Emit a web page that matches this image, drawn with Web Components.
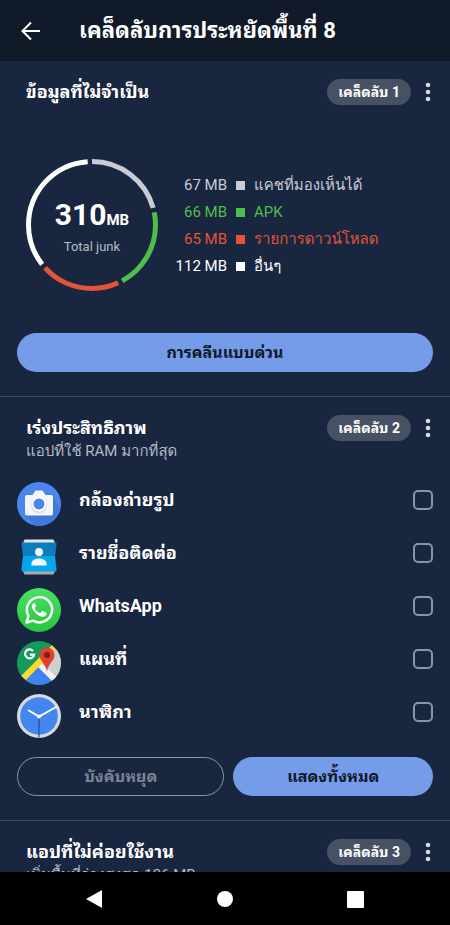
<!DOCTYPE html>
<html lang="th">
<head>
<meta charset="utf-8">
<meta name="viewport" content="width=device-width, initial-scale=1">
<title>เคล็ดลับการประหยัดพื้นที่</title>
<style>
  :root {
    --bg: #19263f;
    --bar: #111a29;
    --accent: #759ce8;
    --line: #3d4757;
    --muted: #b4bac6;
    --silver: #cbcbd7;
    --green: #4fbe4b;
    --red: #e4533a;
    --bold-font: Roboto, "Noto Sans Thai Looped", "Noto Sans", sans-serif;
  }
  body {
    margin: 0;
    height: 100vh;
    display: flex;
    flex-direction: column;
    overflow: hidden;
    background: var(--bg);
    color: #fff;
    font-family: Roboto, Loma, "Noto Sans", sans-serif;
  }
  main {
    flex: 1;
    min-height: 0;
    overflow: hidden;
  }
</style>
</head>
<body>
<app-bar>เคล็ดลับการประหยัดพื้นที่ 8</app-bar>
<main>
  <tip-section heading="ข้อมูลที่ไม่จำเป็น" tip="เคล็ดลับ 1">
    <junk-chart></junk-chart>
    <pill-button slot="actions">การคลีนแบบด่วน</pill-button>
  </tip-section>
  <tip-section heading="เร่งประสิทธิภาพ" sub="แอปที่ใช้ RAM มากที่สุด" tip="เคล็ดลับ 2">
    <app-list>
      <app-row name="กล้องถ่ายรูป">
        <svg viewBox="0 0 44 44">
          <circle cx="22" cy="22" r="22" fill="#4a86ee"/>
          <path d="M8 33.500L18 43.600A22 22 0 0 0 43 28L36 14z" fill="#4079dc"/>
          <path d="M10 13h5.500l3-4.500h7l3 4.500H34q2 0 2 2V31.500q0 2-2 2H10q-2 0-2-2V15q0-2 2-2z" fill="#f5f5f6"/>
          <circle cx="22" cy="23" r="8" fill="#d5dae4"/>
          <circle cx="22" cy="22" r="7.500" fill="#fff"/>
          <circle cx="22" cy="22" r="5.500" fill="#4a86ee"/>
        </svg>
      </app-row>
      <app-row name="รายชื่อติดต่อ">
        <svg viewBox="0 0 44 44">
          <path d="M7.500 4.500h29l2 5h-33z" fill="#e6e6e6"/>
          <path d="M5.500 35h33l-2 4.500h-29z" fill="#a9a9a9"/>
          <path d="M5 7.500h34q1 .500.500 2L38 22H6L4.500 9.500Q4 8 5 7.500z" fill="#0c7cbd"/>
          <path d="M6 21h32l1.500 13q.500 2-1 2.500h-33q-1.500-.500-1-2.500z" fill="#04a7ec"/>
          <circle cx="22" cy="17" r="4" fill="#f3f6f8"/>
          <path d="M14.500 30.500v-2c0-3.500 4-5 7.500-5s7.500 1.500 7.500 5v2z" fill="#f3f6f8"/>
        </svg>
      </app-row>
      <app-row name="WhatsApp">
        <svg viewBox="0 0 44 44">
          <defs>
            <linearGradient id="wa" x2="0" y2="1"><stop stop-color="#4be065"/><stop offset="1" stop-color="#25c63e"/></linearGradient>
          </defs>
          <circle cx="22" cy="22" r="22" fill="url(#wa)"/>
          <path d="M9.500 34.500l2-6.600a12.600 12.600 0 1 1 4.600 4.700z" fill="none" stroke="#fff" stroke-width="2.400" stroke-linejoin="round"/>
          <path d="M17.600 15.200c-.600-.200-1.400 0-1.800.500-1.600 1.700-1.300 4.200 1 7.200 3 4 6.300 6 9.200 5.800 2.100-.200 3.500-1.500 3.500-3.300 0-.500-.100-.700-.500-.900l-3-1.500c-.500-.200-.800-.100-1.100.300l-1.200 1.500c-.300.300-.600.400-1 .200-2.200-.900-3.800-2.500-4.900-4.500-.200-.400-.100-.700.200-1l.900-1.200c.200-.300.200-.600.100-.900z" fill="#fff"/>
        </svg>
      </app-row>
      <app-row name="แผนที่">
        <svg viewBox="0 0 44 44">
          <defs><clipPath id="disc"><circle cx="22" cy="22" r="22"/></clipPath></defs>
          <g clip-path="url(#disc)">
            <path d="M0 0h44v44H0z" fill="#149b58"/>
            <path d="M44 3L21 24l20 20h3z" fill="#cfcfd1"/>
            <path d="M4 44l18-18 18 18z" fill="#3f82f1"/>
            <path d="M24 22l18 16-5 4-16-16z" fill="#f1f1f2"/>
            <path d="M35 4l4 4L9 39l-5-4z" fill="#fdd835"/>
            <path d="M30 30.500C28.500 22 22.500 20 22.500 14a7.500 7.500 0 0 1 15 0c0 6-6 8-7.500 16.500z" fill="#e0402f"/>
            <circle cx="30" cy="14" r="3" fill="#7b1d16"/>
            <path d="M16 10A4.500 4.500 0 1 0 17 13.700H12.800" fill="none" stroke="#fff" stroke-width="2.200"/>
          </g>
        </svg>
      </app-row>
      <app-row name="นาฬิกา">
        <svg viewBox="0 0 44 44">
          <circle cx="22" cy="22" r="22" fill="#d5dae1"/>
          <circle cx="22" cy="22" r="18.800" fill="#4485ef"/>
          <path d="M22 23v20.500" stroke="#2b3f66" stroke-width="1"/>
          <path d="M11 16l11 6.500L40 12.500" fill="none" stroke="#fff" stroke-width="2"/>
          <circle cx="22" cy="22.500" r="2" fill="#fff"/>
        </svg>
      </app-row>
    </app-list>
    <pill-button slot="actions" outline>บังคับหยุด</pill-button>
    <pill-button slot="actions">แสดงทั้งหมด</pill-button>
  </tip-section>
  <tip-section heading="แอปที่ไม่ค่อยใช้งาน" sub="เพิ่มพื้นที่ว่างสูงสุด 126 MB" tip="เคล็ดลับ 3"></tip-section>
</main>
<system-nav></system-nav>

<script>
class AppBar extends HTMLElement {
  connectedCallback() {
    this.attachShadow({ mode: 'open' });
    this.shadowRoot.innerHTML = `
      <style>
        :host { display: block; background: var(--bar); }
        header {
          display: flex;
          align-items: center;
          height: 61px;
          padding: 0 18px;
          gap: 35px;
        }
        button {
          width: 26px;
          height: 26px;
          padding: 0;
          border: 0;
          background: none;
          color: inherit;
        }
        svg { display: block; }
        h1 {
          margin: 0;
          font-family: var(--bold-font);
          font-size: 22px;
          line-height: 32px;
          font-weight: 700;
          white-space: nowrap;
        }
      </style>
      <header>
        <button aria-label="ย้อนกลับ">
          <svg width="26" height="26" viewBox="0 0 26 26" fill="none" stroke="#fff" stroke-width="2">
            <path d="M22 13H5M13 4.500L4.500 13l8.500 8.500"/>
          </svg>
        </button>
        <h1><slot></slot></h1>
      </header>
    `;
  }
}
customElements.define('app-bar', AppBar);

class TipSection extends HTMLElement {
  connectedCallback() {
    const sub = this.getAttribute('sub');
    this.attachShadow({ mode: 'open' });
    this.shadowRoot.innerHTML = `
      <style>
        :host { display: block; border-bottom: 1px solid var(--line); }
        section { padding: 18px 0 24px; }
        .head {
          display: flex;
          align-items: center;
          height: 26px;
          padding: 0 10px 0 26px;
          gap: 5px;
          font-family: var(--bold-font);
        }
        h2 {
          flex: 1;
          margin: 0;
          font-size: 18px;
          line-height: 26px;
          font-weight: 700;
          white-space: nowrap;
        }
        .tip {
          padding: 0 11px;
          border-radius: 13px;
          background: #465264;
          font-size: 14px;
          line-height: 26px;
          font-weight: 700;
          white-space: nowrap;
        }
        button {
          width: 24px;
          height: 24px;
          padding: 0;
          border: 0;
          background: none;
        }
        svg { display: block; }
        p {
          margin: 0;
          padding: 0 26px;
          color: var(--muted);
          font-size: 15px;
          line-height: 20px;
          white-space: nowrap;
        }
        .actions {
          display: grid;
          grid-auto-flow: column;
          grid-template-columns: 26fr;
          grid-auto-columns: 25fr;
          gap: 9px;
          padding: 0 17px;
        }
      </style>
      <section>
        <div class="head">
          <h2>${this.getAttribute('heading')}</h2>
          <span class="tip">${this.getAttribute('tip')}</span>
          <button aria-label="เมนู">
            <svg width="24" height="24" viewBox="0 0 24 24" fill="#d5d9e0">
              <circle cx="12" cy="5" r="2.300"/><circle cx="12" cy="12" r="2.300"/><circle cx="12" cy="19" r="2.300"/>
            </svg>
          </button>
        </div>
        ${sub ? `<p>${sub}</p>` : ''}
        <slot></slot>
        <div class="actions"><slot name="actions"></slot></div>
      </section>
    `;
  }
}
customElements.define('tip-section', TipSection);

class JunkChart extends HTMLElement {
  connectedCallback() {
    const items = [
      { mb: 67, label: 'แคชที่มองเห็นได้', color: 'var(--silver)' },
      { mb: 66, label: 'APK', color: 'var(--green)' },
      { mb: 65, label: 'รายการดาวน์โหลด', color: 'var(--red)' },
      { mb: 112, label: 'อื่นๆ', color: '#fff' },
    ];
    const total = items.reduce((sum, i) => sum + i.mb, 0);
    const gap = 4;
    let start = 0;
    const arcs = items.map((i) => {
      const len = (360 - gap * items.length) * i.mb / total;
      const arc = `<circle cx="66" cy="66" r="63.500" pathLength="360" stroke="${i.color}"
        stroke-dasharray="${len} ${360 - len}" stroke-dashoffset="${-start}"/>`;
      start += len + gap;
      return arc;
    }).join('');

    this.attachShadow({ mode: 'open' });
    this.shadowRoot.innerHTML = `
      <style>
        :host {
          display: flex;
          align-items: center;
          gap: 16px;
          padding: 54px 26px 42px;
        }
        .ring { display: grid; place-items: center; }
        .ring > * { grid-area: 1 / 1; }
        svg { display: block; }
        .total { padding-top: 6px; text-align: center; line-height: 32px; font-weight: 700; font-size: 30px; }
        .total small { font-size: 15px; }
        .caption { font-size: 13px; line-height: 22px; font-weight: 400; color: var(--muted); }
        ul { list-style: none; margin: 0; padding: 2px 0 0; font-size: 15px; line-height: 27px; }
        li {
          display: grid;
          grid-template-columns: 53px 9px auto;
          align-items: center;
          gap: 9px;
          white-space: nowrap;
        }
        .size { text-align: right; }
        i { height: 9px; background: currentColor; }
      </style>
      <div class="ring">
        <svg width="132" height="132" viewBox="0 0 132 132">
          <g fill="none" stroke-width="5" transform="rotate(-90 66 66)">${arcs}</g>
        </svg>
        <div class="total">${total}<small>MB</small><div class="caption">Total junk</div></div>
      </div>
      <ul>
        ${items.map((i) => `
          <li style="color: ${i.color}"><span class="size">${i.mb} MB</span><i></i><span>${i.label}</span></li>
        `).join('')}
      </ul>
    `;
  }
}
customElements.define('junk-chart', JunkChart);

class AppList extends HTMLElement {
  connectedCallback() {
    this.attachShadow({ mode: 'open' });
    this.shadowRoot.innerHTML = `
      <style>
        :host { display: block; padding: 17px 17px 14px; }
      </style>
      <slot></slot>
    `;
  }
}
customElements.define('app-list', AppList);

class AppRow extends HTMLElement {
  connectedCallback() {
    this.attachShadow({ mode: 'open' });
    this.shadowRoot.innerHTML = `
      <style>
        :host { display: block; }
        label {
          display: grid;
          grid-template-columns: 44px 1fr 20px;
          column-gap: 18px;
          height: 53px;
          padding-top: 4px;
          box-sizing: border-box;
          font-family: var(--bold-font);
          font-size: 18px;
          line-height: 36px;
          font-weight: 700;
        }
        .icon { height: 44px; }
        ::slotted(svg) { display: block; width: 44px; height: 44px; }
        input {
          appearance: none;
          width: 20px;
          height: 20px;
          margin: 8px 0;
          box-sizing: border-box;
          border: 2px solid #8b94a4;
          border-radius: 5px;
        }
        input:checked { background: var(--accent); }
      </style>
      <label>
        <span class="icon"><slot></slot></span>
        <span>${this.getAttribute('name')}</span>
        <input type="checkbox">
      </label>
    `;
  }
}
customElements.define('app-row', AppRow);

class PillButton extends HTMLElement {
  connectedCallback() {
    this.attachShadow({ mode: 'open' });
    this.shadowRoot.innerHTML = `
      <style>
        :host { display: block; }
        button {
          width: 100%;
          height: 39px;
          border: 0;
          border-radius: 20px;
          background: var(--accent);
          color: #10182a;
          font-family: var(--bold-font);
          font-size: 16px;
          line-height: 20px;
          font-weight: 700;
        }
        :host([outline]) button {
          border: 1px solid #8b94a4;
          background: none;
          color: #7b8494;
        }
      </style>
      <button><slot></slot></button>
    `;
  }
}
customElements.define('pill-button', PillButton);

class SystemNav extends HTMLElement {
  connectedCallback() {
    this.attachShadow({ mode: 'open' });
    this.shadowRoot.innerHTML = `
      <style>
        :host { display: block; background: #000; }
        nav {
          display: flex;
          justify-content: space-between;
          align-items: center;
          height: 53px;
          padding: 0 86px;
        }
        button { padding: 0; border: 0; background: none; }
        svg { display: block; }
      </style>
      <nav>
        <button aria-label="ย้อนกลับ"><svg width="18" height="18" viewBox="0 0 18 18" fill="#fff"><path d="M0 9L16 0v18z"/></svg></button>
        <button aria-label="หน้าหลัก"><svg width="18" height="18" viewBox="0 0 18 18" fill="#fff"><circle cx="9" cy="9" r="8"/></svg></button>
        <button aria-label="ล่าสุด"><svg width="18" height="18" viewBox="0 0 18 18" fill="#fff"><rect x="1" y="1" width="17" height="17" rx="1"/></svg></button>
      </nav>
    `;
  }
}
customElements.define('system-nav', SystemNav);
</script>
</body>
</html>
